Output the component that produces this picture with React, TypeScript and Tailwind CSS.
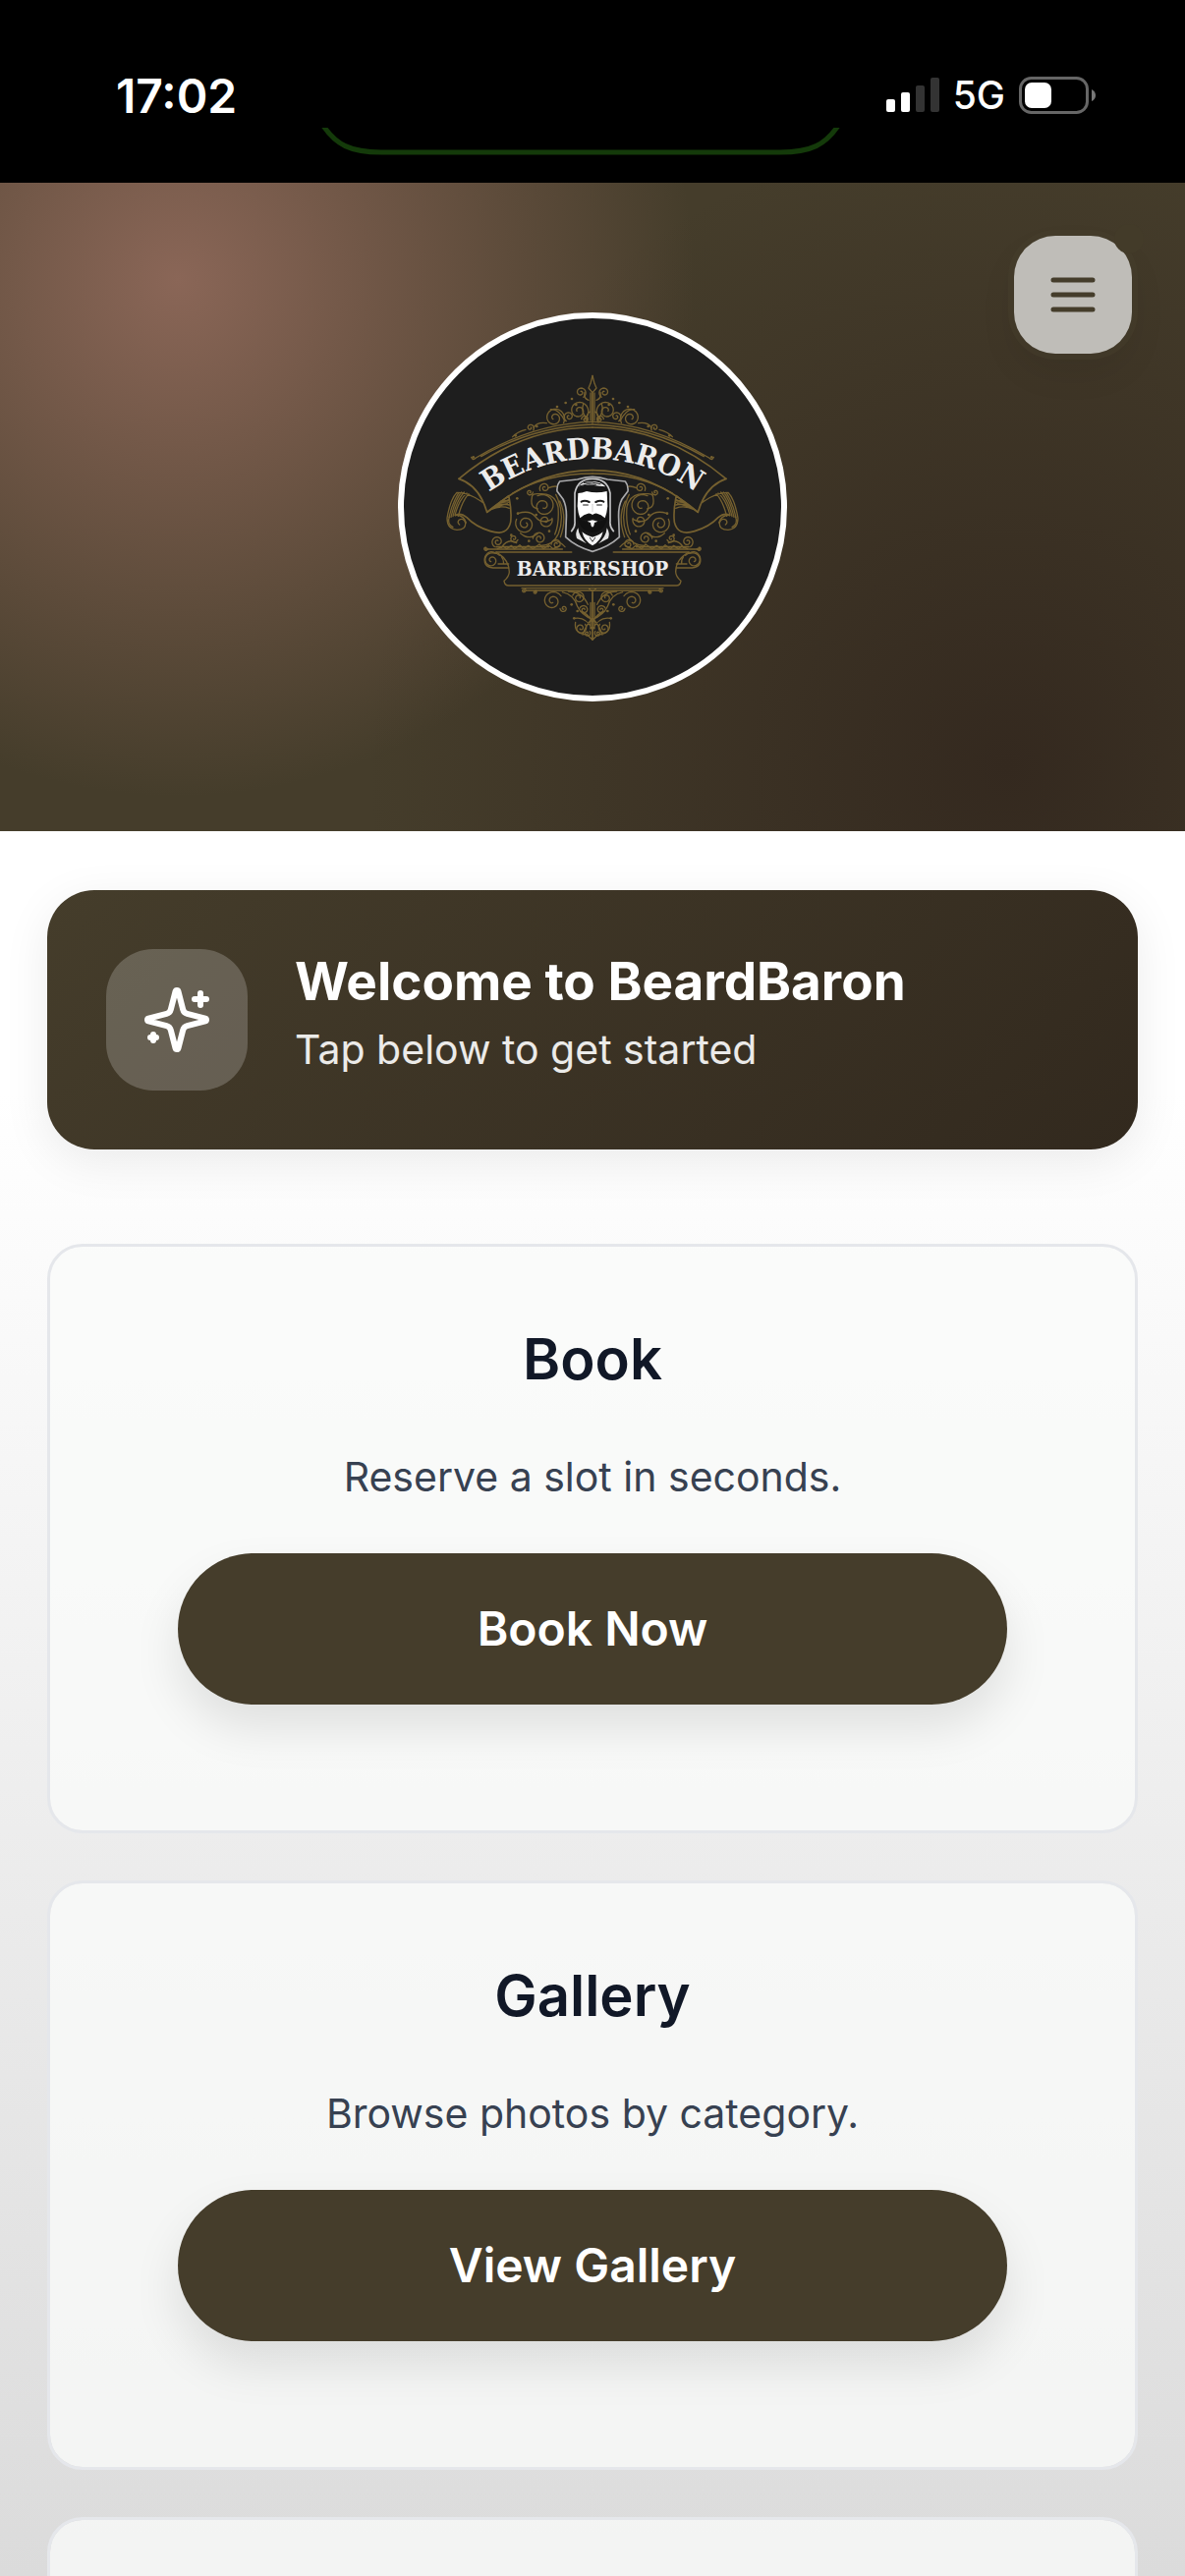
import React from "react";

const GOLD = "#75602f";

const cards = [
  { title: "Book", description: "Reserve a slot in seconds.", action: "Book Now" },
  { title: "Gallery", description: "Browse photos by category.", action: "View Gallery" },
];

// Archimedean spiral, r shrinks from the outside to the centre
function spiral(cx: number, cy: number, r: number, start: number, turns: number) {
  const steps = Math.ceil(Math.abs(turns) * 20);
  const points: string[] = [];
  for (let i = 0; i <= steps; i++) {
    const t = i / steps;
    const angle = ((start + 360 * turns * t) * Math.PI) / 180;
    const radius = r * (1 - t * 0.82);
    points.push(`${(cx + radius * Math.cos(angle)).toFixed(1)} ${(cy + radius * Math.sin(angle)).toFixed(1)}`);
  }
  return "M" + points.join("L");
}

// [cx, cy, radius, start angle, turns]
const curls: [number, number, number, number, number][] = [
  [604, 298, 17, 60, -1.4],
  [598, 354, 32, 60, -1.7],
  [524, 376, 32, 30, -1.7],
  [568, 372, 16, 120, 1.4],
  [618, 380, 12, 180, 1.3],
  [450, 406, 12, 40, -1.2],
  [490, 645, 36, -120, 1.6],
  [434, 700, 30, -150, -1.7],
  [478, 744, 20, 180, 1.5],
  [496, 690, 22, -20, 1.3],
  [400, 744, 13, 20, 1.3],
  [350, 754, 18, 120, 1.5],
  [494, 590, 16, 150, 1.4],
  [448, 603, 10, 0, 1.2],
  [530, 762, 16, 180, 1.4],
  [332, 811, 24, -60, -1.5],
  [314, 775, 7, 0, 1.2],
  [518, 935, 30, -30, -1.7],
  [552, 958, 11, 180, -1.3],
  [598, 925, 20, -160, 1.5],
  [614, 962, 14, 200, 1.4],
  [430, 903, 7, -60, 1.2],
  [464, 908, 6, -60, 1.2],
  [604, 1018, 18, -40, 1.5],
  [624, 1034, 10, -40, 1.2],
];

const dots: [number, number][] = [
  [276, 496], [405, 430], [470, 402], [532, 342], [558, 330], [577, 318], [590, 336], [410, 622],
  [468, 672], [412, 668], [392, 734], [446, 752], [508, 722], [576, 946], [584, 988], [594, 966],
];

function Filigree() {
  return (
    <g fill="none" stroke={GOLD} strokeWidth="4" strokeLinecap="round" strokeLinejoin="round">
      {curls.map(([cx, cy, r, start, turns], i) => (
        <path key={i} d={spiral(cx, cy, r, start, turns)} />
      ))}
      {dots.map(([cx, cy], i) => (
        <circle key={i} cx={cx} cy={cy} r="4" fill={GOLD} stroke="none" />
      ))}
      {/* finial */}
      <path d="M640 247l-6 24-6 14 12 14M634 300v84M628 322q-16-6-12-24M640 300v90M622 390q-2-28 12-34" />
      <path d="M626 384q-24-26-14-50M556 386q-20-40-44-36M500 392q-30-4-40 14M436 412q-26 6-40 22" />
      {/* upper banner */}
      <path d="M270 496q4 12 14 2Q460 392 640 388M300 494Q460 402 640 396" />
      <path d="M232 562Q420 405 640 405" strokeWidth="5" />
      <path d="M232 562q62 20 86 102Q470 536 640 536" strokeWidth="5" />
      <path d="M396 606Q500 546 640 546" />
      {/* folded tail */}
      <path d="M318 664q20-14 66-50 10 44 6 80-10 44-62 28-46-14-72-42-20-16-34-6" strokeWidth="5" />
      <path d="M330 656q30-14 56-4M344 646q20-10 42-4M354 638q20-8 32-4M364 630l22-2M336 650l44-12M350 640l34-14" />
      <path d="M304 634q-40-30-78-30-20 20-30 78 0 34 30 36 28 0 26-22-6-16-20-8-6 8 2 14M256 606q-24 20-36 68M248 603q-22 24-34 74M240 603q-20 24-32 76M232 604q-20 30-30 76M262 608q-20 22-32 68" />
      <path d="M204 676q-10 24 10 34M222 672q26 2 32 24" />
      {/* leaf work beside the crest */}
      <path d="M546 590q-20-10-40 0M528 610q30 60 8 120-16 36-54 36M540 630q24 50 2 110M455 618q0-12 22-10 48-4 58 40 4 50-10 84" />
      <path d="M412 668q36-12 54 10 18 24 50 8M455 620q-6 30 18 34M420 728q26 24 54 0M556 770q-18-20-36-18M362 772q20-30 46-14" />
      {/* plaque */}
      <path d="M312 777h236M346 786h230M346 770h160" strokeWidth="5" />
      <path d="M350 776l18-8 10 8 14-10 10 10 16-12 12 12 14-10 14 10 20-14 12 14 16-12 14 12 20-10" />
      <path d="M346 786q40 22 40 60 0 14-16 28 2 14 14 14h256" />
      <path d="M356 796q-30-24-44 4-8 30 24 34h48M352 822h32M362 800q8 10 6 22" />
      <path d="M424 896h216M436 903h204" />
      {/* pendant */}
      <path d="M548 908q36 8 46 44 12 26 46 40M566 906q42 0 60 40M640 906l-10-8M640 910v140M634 940v80M586 988q34-6 54 34M602 966q24 6 38 34M588 1000q-6 36 36 38l16 16M610 1038q10-30 30-50" />
    </g>
  );
}

function Crest() {
  return (
    <g strokeLinejoin="round" strokeLinecap="round">
      {/* shield and hood */}
      <path
        d="M640 556c-20 0-34 4-46 8l-54 6q-10 12-8 30l18 24q12 22 10 60l-2 56q32 30 82 44 50-14 82-44l-2-56q-2-38 10-60l18-24q2-18-8-30l-54-6c-12-4-26-8-46-8z"
        fill="#171717"
        stroke="#a9a9ab"
        strokeWidth="5"
      />
      <path d="M576 722q12-14 10-30V606q8-44 54-44t54 44v86q-2 16 10 30" fill="none" stroke="#c4c4c6" strokeWidth="5" />
      {/* face and hair */}
      <path d="M596 606q12 0 26-6 30 8 62 0l2 46q-2 22-8 36-12-12-24-14-8-2-14 4-6-6-14-4-12 2-24 14-6-14-8-36z" fill="#fff" />
      <path d="M598 586q10-16 38-16 30 0 44 16-20-2-36-4-22-4-46 4z" fill="#e8e8e8" />
      <path d="M602 584q24-10 48-4M614 574q24-4 50 4" stroke="#1c1c1c" strokeWidth="3" fill="none" />
      <path d="M606 632q10-6 24 1M650 633q14-7 24-1" stroke="#1c1c1c" strokeWidth="6" fill="none" />
      <path d="M612 642h14M654 642h14" stroke="#666" strokeWidth="4" />
      <path d="M640 640v22" stroke="#ddd" strokeWidth="4" />
      {/* beard */}
      <path d="M598 694q-6-16-6-30 4 22 14 24l18 6q6 14 16 14t16-14l18-6q10-2 14-24 0 14-6 30-10 30-42 32-32-2-42-32z" fill="#111" />
      <path d="M606 686q8-14 24-14l10 4 10-4q16 0 24 14-14 4-34-4-20 8-34 4z" fill="#111" />
      <path d="M624 692q8-2 16-4 8 2 16 4l-10 4-2 10-4 4-4-4-2-10z" fill="#f4f4f4" />
      {/* collar */}
      <path d="M596 712q2 26 26 48l-30-16q-6-16 4-32zM684 712q-2 26-26 48l30-16q6-16-4-32z" fill="#e4e4e4" />
      <path d="M608 724q10 10 32 16 22-6 32-16-6 28-32 42-26-14-32-42z" fill="#f6f6f6" />
      <path d="M632 742l8 12 8-12" fill="none" stroke="#444" strokeWidth="3" />
    </g>
  );
}

function Logo() {
  return (
    <svg viewBox="64 72 1152 1152" className="size-full" role="img" aria-label="BeardBaron Barbershop">
      <defs>
        <path id="banner-arc" d="M266 652A539 539 0 0 1 1014 652" />
        <g id="filigree-half">
          <Filigree />
        </g>
      </defs>
      <use href="#filigree-half" />
      <use href="#filigree-half" transform="translate(1280 0) scale(-1 1)" />
      <Crest />
      <g fill="#ececec" fontWeight="700" textAnchor="middle" className="font-['DejaVu_Serif_Condensed','DejaVu_Serif',serif]">
        <text fontSize="90">
          <textPath href="#banner-arc" startOffset="50%">BEARDBARON</textPath>
        </text>
        <text x="640" y="857" fontSize="63">BARBERSHOP</text>
      </g>
    </svg>
  );
}

function StatusBar() {
  return (
    <div className="flex h-[186px] shrink-0 items-start bg-black pl-[118px] pr-[90px] text-white">
      <span className="mt-[68px] w-[208px] text-[48px] leading-[60px] font-semibold">17:02</span>
      <svg viewBox="0 0 530 30" className="mt-[130px] h-[30px] w-[530px]" fill="none" stroke="#143a0a" strokeWidth="5">
        <path d="M3 -2C16 17 30 25 62 25H468C500 25 514 17 527 -2" />
      </svg>
      <div className="mt-[69px] ml-auto flex h-[56px] items-center gap-[14px]">
        <svg viewBox="0 0 54 36" className="h-[36px] w-[54px]">
          <rect x="0" y="22" width="9" height="13" rx="2" fill="#fff" />
          <rect x="15" y="15" width="9" height="20" rx="2" fill="#fff" />
          <rect x="30" y="8" width="9" height="27" rx="2" fill="#333" />
          <rect x="45" y="0" width="9" height="35" rx="2" fill="#333" />
        </svg>
        <span className="text-[39px] leading-[56px] font-medium">5G</span>
        <svg viewBox="0 0 79 38" className="h-[38px] w-[79px]">
          <rect x="1.5" y="1.5" width="68" height="35" rx="11" fill="none" stroke="#666" strokeWidth="3" />
          <rect x="6" y="6" width="27" height="26" rx="7" fill="#fff" />
          <path d="M74 13q4 2 4 6t-4 6z" fill="#777" />
        </svg>
      </div>
    </div>
  );
}

function ServiceCard({ title, description, action }: { title: string; description: string; action: string }) {
  return (
    <section className="flex h-[600px] shrink-0 flex-col items-center rounded-[36px] border-3 border-[#e5e7eb] bg-[#fafbfa]/78 bg-clip-padding px-[130px] pt-[76px] text-center">
      <h2 className="text-[58px] leading-[76px] font-semibold text-[#111827]">{title}</h2>
      <p className="mt-[52px] text-[41px] leading-[60px] text-[#374151]">{description}</p>
      <button className="mt-12 h-[154px] w-full rounded-full bg-[#453d2b] text-[48px] font-semibold text-white shadow-[0_24px_48px_rgba(0,0,0,0.1)]">
        {action}
      </button>
    </section>
  );
}

export default function App() {
  return (
    <div className="flex h-screen flex-col overflow-hidden bg-white font-[Inter,'Liberation_Sans',sans-serif]">
      <StatusBar />

      <header className="relative flex h-[660px] shrink-0 items-center justify-center bg-[#453d2b] bg-[radial-gradient(circle_at_15%_15%,#8a6657_0%,transparent_45%),radial-gradient(circle_at_85%_90%,#34291f_0%,transparent_55%)]">
        <div className="size-[396px] overflow-hidden rounded-full border-6 border-white bg-[#1e1e1e]">
          <Logo />
        </div>
        <button
          aria-label="Open menu"
          className="absolute top-[54px] right-[54px] flex size-[120px] items-center justify-center rounded-[42px] bg-[#bfbdb8] shadow-[0_0_0_6px_#453d2b80,0_18px_36px_rgba(0,0,0,0.08)]"
        >
          <svg viewBox="0 0 46 36" className="h-[36px] w-[46px]" stroke="#453d2b" strokeWidth="5" strokeLinecap="round">
            <path d="M3 3h40M3 18h40M3 33h40" />
          </svg>
          <span className="absolute -top-3 -right-3 size-[30px] rounded-full bg-[#433b29]" />
        </button>
      </header>

      <main className="flex min-h-0 flex-1 flex-col bg-linear-to-b from-white from-15% to-[#dbdbdb] px-12 pt-[60px]">
        <div className="flex h-[264px] shrink-0 items-center gap-12 rounded-[48px] bg-linear-135 from-[#453d2b] to-[#32291e] px-[60px] shadow-[0_12px_48px_rgba(0,0,0,0.08)]">
          <div className="flex size-[144px] shrink-0 items-center justify-center rounded-[48px] bg-white/20">
            <svg viewBox="0 0 24 24" className="size-[72px]" fill="none" stroke="#fff" strokeWidth="2" strokeLinecap="round" strokeLinejoin="round">
              <path d="M9.937 15.5A2 2 0 0 0 8.5 14.063l-6.135-1.582a.5.5 0 0 1 0-.962L8.5 9.936A2 2 0 0 0 9.937 8.5l1.582-6.135a.5.5 0 0 1 .963 0L14.063 8.5A2 2 0 0 0 15.5 9.937l6.135 1.581a.5.5 0 0 1 0 .964L15.5 14.063a2 2 0 0 0-1.437 1.437l-1.582 6.135a.5.5 0 0 1-.963 0z" />
              <path d="M20 3v4M22 5h-4M4 17v2M5 18H3" />
            </svg>
          </div>
          <div className="pb-3">
            <h1 className="text-[53px] leading-[72px] font-bold text-white">Welcome to BeardBaron</h1>
            <p className="text-[41px] leading-[66px] text-white/90">Tap below to get started</p>
          </div>
        </div>

        <div className="mt-24 flex flex-col gap-12">
          {cards.map((card) => (
            <ServiceCard key={card.title} {...card} />
          ))}
          <section className="h-[600px] shrink-0 rounded-[36px] border-3 border-[#e5e7eb] bg-[#fafbfa]/78 bg-clip-padding" />
        </div>
      </main>
    </div>
  );
}
